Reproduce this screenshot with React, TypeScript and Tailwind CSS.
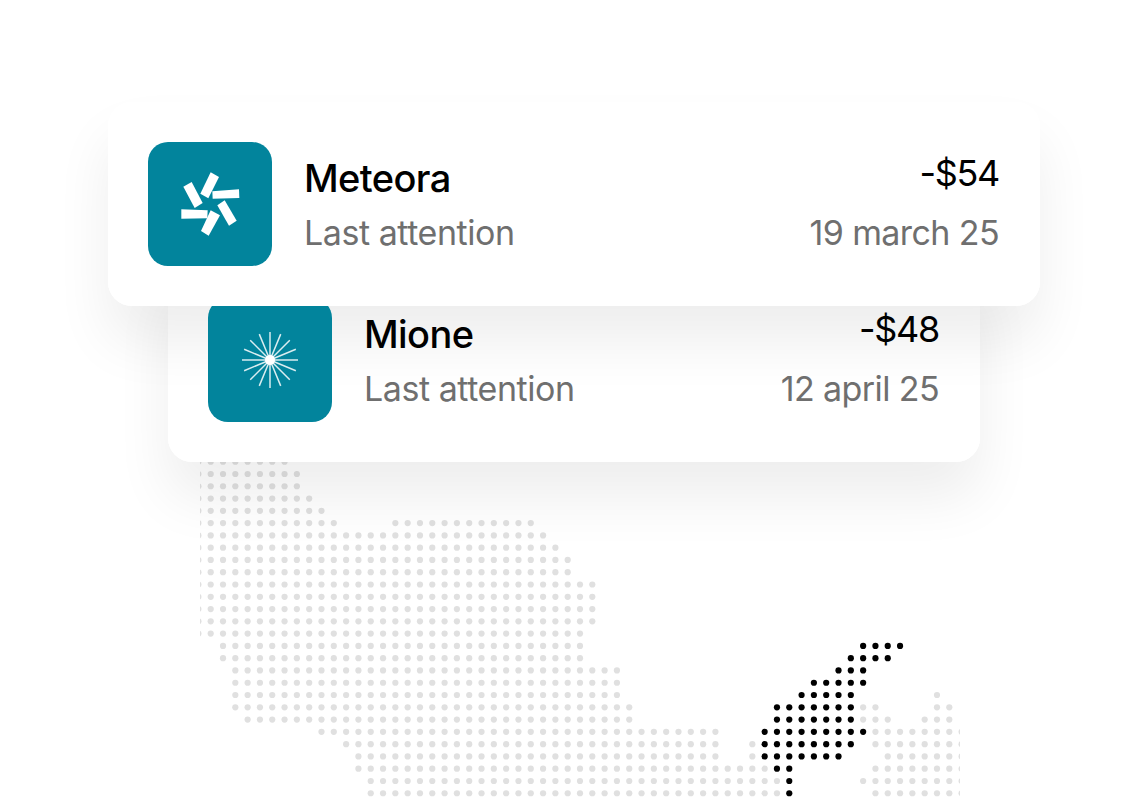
import React from 'react';

type Span = [number, number];

// light dots per row of the map, as column ranges
const lightRows: Span[][] = [
  [[-1, 6]],
  [[-1, 7]],
  [[-1, 7]],
  [[-1, 8]],
  [[-1, 9]],
  [[-1, 10], [15, 26]],
  [[-1, 27]],
  [[-1, 28]],
  [[-1, 29]],
  [[-1, 29]],
  [[-1, 31]],
  [[-1, 31]],
  [[-1, 31]],
  [[-1, 31]],
  [[-1, 30]],
  [[1, 30]],
  [[1, 30]],
  [[2, 33]],
  [[2, 33]],
  [[2, 33], [59, 59]],
  [[2, 34], [53, 54], [59, 60]],
  [[3, 34], [53, 55], [58, 60]],
  [[9, 41], [54, 61]],
  [[11, 41], [44, 44], [54, 61]],
  [[12, 41], [44, 44], [55, 61]],
  [[12, 45], [54, 61]],
  [[13, 46], [53, 61]],
  [[13, 46], [54, 61]],
];

// black dots, same idea: [row, from, to]
const blackRows: [number, number, number][] = [
  [15, 53, 56],
  [16, 52, 55],
  [17, 51, 53],
  [18, 49, 53],
  [19, 48, 52],
  [20, 46, 52],
  [21, 46, 52],
  [22, 45, 53],
  [23, 45, 52],
  [24, 45, 51],
  [25, 46, 47],
  [26, 47, 47],
  [27, 47, 47],
];

const dotX = (c: number) => 210.7 + 12.31 * c;
const dotY = (r: number) => 461.7 + 12.28 * r;

const DotMap = () => {
  const dots: React.ReactElement[] = [];
  lightRows.forEach((spans, r) => {
    spans.forEach(([from, to]) => {
      for (let c = from; c <= to; c++) {
        dots.push(<circle key={`l${r}-${c}`} cx={dotX(c)} cy={dotY(r)} r={3.1} fill="#e0e0e0" />);
      }
    });
  });
  blackRows.forEach(([r, from, to]) => {
    for (let c = from; c <= to; c++) {
      dots.push(<circle key={`b${r}-${c}`} cx={dotX(c)} cy={dotY(r)} r={3.1} fill="#000" />);
    }
  });
  return (
    <svg viewBox="0 456 1146 344" className="block w-[1146px] h-[344px] -mt-[6px] shrink-0">
      <defs>
        <clipPath id="map-clip">
          <rect x="200" y="456" width="760" height="344" />
        </clipPath>
      </defs>
      <g clipPath="url(#map-clip)">{dots}</g>
    </svg>
  );
};

const PinwheelIcon = () => (
  <svg viewBox="24 36 372 372" className="w-full h-full" fill="#fff">
    <polygon points="130,170 155,156 188,219 164,234" />
    <polygon points="212,127 237,141 205,205 181,191" />
    <polygon points="217,184 297,178 298,204 218,206" />
    <polygon points="232,226 254,211 290,272 267,287" />
    <polygon points="212,241 240,256 206,317 183,303" />
    <polygon points="124,238 203,241 202,265 124,266" />
  </svg>
);

const BurstIcon = () => (
  <svg viewBox="0 0 124 124" className="w-full h-full">
    {Array.from({ length: 16 }).map((_, i) => {
      const a = (i * Math.PI) / 8;
      return (
        <line
          key={i}
          x1={62}
          y1={62}
          x2={62 + 28 * Math.cos(a)}
          y2={62 + 28 * Math.sin(a)}
          stroke="#fff"
          strokeWidth={1.5}
          strokeOpacity={0.85}
        />
      );
    })}
    <circle cx={62} cy={62} r={5} fill="#fff" />
  </svg>
);

// shadow sits on its own layer: the top card's shadow falls on the lower card's
// white body, but not on its icon or text
const TxCard = ({
  icon,
  name,
  amount,
  date,
  className,
  shadowClass,
  bodyClass,
}: {
  icon: React.ReactNode;
  name: string;
  amount: string;
  date: string;
  className: string;
  shadowClass: string;
  bodyClass: string;
}) => (
  <div className={`relative h-[204px] ${className}`}>
    <div className={`absolute inset-0 rounded-[24px] shadow-[0_36px_56px_rgba(0,0,0,0.07)] ${shadowClass}`} />
    <div className={`relative h-full bg-white rounded-[24px] p-10 flex items-start gap-[32px] ${bodyClass}`}>
      <div className="relative z-[15] w-[124px] h-[124px] shrink-0 rounded-[20px] bg-[#02849c] overflow-hidden">{icon}</div>
      <div className="relative z-[15] flex-1 pt-[12px]">
        <div className="text-[38px] leading-[48px] font-medium tracking-[-0.6px] text-black">{name}</div>
        <div className="mt-[7px] text-[34px] leading-[48px] tracking-[-0.45px] text-[#6f6f6f]">Last attention</div>
      </div>
      <div className="relative z-[15] pt-[7px] pr-[1px] text-right">
        <div className="text-[36px] leading-[48px] tracking-[-1.3px] text-black">{amount}</div>
        <div className="mt-[12px] text-[34px] leading-[48px] tracking-[-0.6px] text-[#6f6f6f]">{date}</div>
      </div>
    </div>
  </div>
);

export default function App() {
  return (
    <div className="h-[800px] w-[1146px] overflow-hidden bg-white pt-[102px] flex flex-col antialiased font-['Inter',sans-serif]">
      <TxCard
        className="ml-[108px] w-[932px]"
        shadowClass="z-10"
        bodyClass="z-20"
        icon={<PinwheelIcon />}
        name="Meteora"
        amount="-$54"
        date="19 march 25"
      />
      <TxCard
        className="-mt-[48px] ml-[168px] w-[812px]"
        shadowClass=""
        bodyClass=""
        icon={<BurstIcon />}
        name="Mione"
        amount="-$48"
        date="12 april 25"
      />
      <DotMap />
    </div>
  );
}
